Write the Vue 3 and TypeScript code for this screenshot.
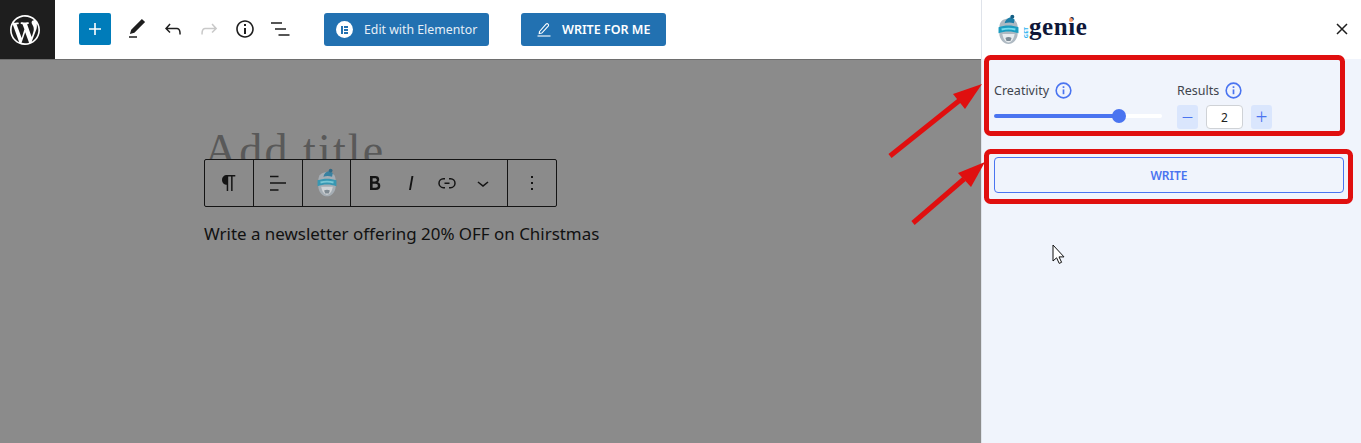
<script setup lang="ts">
const P = {
  plus: 'M18 11.2h-5.2V6h-1.6v5.2H6v1.6h5.2V18h1.6v-5.2H18z',
  pen: 'M20.1 5.1L16.9 2 6.2 12.7l-1.3 4.4 4.5-1.3L20.1 5.1zM4 20.8h8v-1.5H4v1.5z',
  undo: 'M18.3 11.7c-.6-.6-1.4-.9-2.3-.9H6.7l2.9-3.3-1.1-1-4.5 5L8.5 16l1-1-2.7-2.7H16c.5 0 .9.2 1.3.5 1 1 1 3.4 1 4.5v.3h1.5v-.2c0-1.5 0-4.3-1.5-5.7z',
  redo: 'M15.6 6.5l-1.1 1 2.9 3.3H8c-.9 0-1.7.3-2.3.9-1.4 1.5-1.4 4.2-1.4 5.6v.2h1.5v-.3c0-1.1 0-3.5 1-4.5.3-.3.7-.5 1.3-.5h9.2L14.5 15l1.1 1.1 4.6-4.6-4.6-5z',
  info: 'M12 3.2c-4.8 0-8.8 3.9-8.8 8.8 0 4.8 3.9 8.8 8.8 8.8 4.8 0 8.8-3.9 8.8-8.8 0-4.8-4-8.8-8.8-8.8zm0 16c-4 0-7.2-3.3-7.2-7.2C4.8 8 8 4.8 12 4.8s7.2 3.3 7.2 7.2c0 4-3.2 7.2-7.2 7.2zM11 17h2v-6h-2v6zm0-8h2V7h-2v2z',
  list: 'M2 5.2h11v1.6H2zM6 11.2h11v1.6H6zM9.5 17.2h11v1.6H9.5z',
  para: 'M18.3 4H9.9v-.1l-.9.2c-2.3.4-4 2.4-4 4.8s1.7 4.4 4 4.8l.7.1V20h1.5V5.5h2.9V20h1.5V5.5h2.7V4z',
  align: 'M4 19.8h8.5v-1.5H4v1.5zm8.5-15H4v1.5h8.5V4.8zM4 11.2v1.5h16v-1.5H4z',
  bold: 'M14.7 11.3c1-.6 1.5-1.6 1.5-3 0-2.3-1.3-3.4-4-3.4H7v14h5.8c1.4 0 2.5-.3 3.3-1 .8-.7 1.2-1.7 1.2-2.9.1-1.9-.8-3.1-2.6-3.7zm-5.1-4h2.3c.6 0 1.1.1 1.4.4.3.3.5.7.5 1.2s-.2 1-.5 1.2c-.3.3-.8.4-1.4.4H9.6V7.3zm4.6 9c-.4.3-1 .4-1.7.4H9.6v-3.9h2.9c.7 0 1.3.2 1.7.5.4.3.6.8.6 1.5s-.2 1.2-.6 1.5z',
  italic: 'M12.5 5L10 19h1.9l2.5-14z',
  link: 'M10 17.389H8.444A5.194 5.194 0 1 1 8.444 7H10v1.5H8.444a3.694 3.694 0 0 0 0 7.389H10v1.5ZM14 7h1.556a5.194 5.194 0 0 1 0 10.39H14v-1.5h1.556a3.694 3.694 0 0 0 0-7.39H14V7Zm-4.5 6h5v-1.5h-5V13Z',
  chevron: 'M17.5 11.6L12 16l-5.5-4.4.9-1.2L12 14l4.5-3.6 1 1.2z',
  more: 'M13 19h-2v-2h2v2zm0-6h-2v-2h2v2zm0-6h-2V5h2v2z',
}
const wp = 'M20 10c0-5.51-4.49-10-10-10C4.48 0 0 4.49 0 10c0 5.52 4.48 10 10 10 5.51 0 10-4.48 10-10zM7.78 15.37L4.37 6.22c.55-.02 1.17-.08 1.17-.08.5-.06.44-1.13-.06-1.11 0 0-1.45.11-2.37.11-.18 0-.37 0-.58-.01C4.12 2.69 6.87 1.11 10 1.11c2.33 0 4.45.87 6.05 2.34-.68-.11-1.65.39-1.65 1.58 0 .74.45 1.36.9 2.1.35.61.55 1.36.55 2.46 0 1.49-1.4 5-1.4 5l-3.03-8.37c.54-.02.82-.17.82-.17.5-.05.44-1.25-.06-1.22 0 0-1.44.12-2.38.12-.87 0-2.33-.12-2.33-.12-.5-.03-.56 1.2-.06 1.22l.92.08 1.26 3.41zM17.41 10c.24-.64.74-1.87.43-4.25.7 1.29 1.05 2.71 1.05 4.25 0 3.29-1.73 6.24-4.4 7.78.97-2.59 1.94-5.2 2.92-7.78zM6.1 18.09C3.12 16.65 1.11 13.53 1.11 10c0-1.3.23-2.48.72-3.59C3.25 10.3 4.67 14.2 6.1 18.09zm4.03-6.63l2.58 6.98c-.86.29-1.76.45-2.71.45-.79 0-1.57-.11-2.29-.33.81-2.38 1.62-4.74 2.42-7.1z'

const tools = [
  { d: P.pen, color: '#1e1e1e' },
  { d: P.undo, color: '#1e1e1e' },
  { d: P.redo, color: '#c9c9c9' },
  { d: P.info, color: '#1e1e1e' },
  { d: P.list, color: '#1e1e1e' },
]
const formats = [P.bold, P.italic, P.link, P.chevron]
const creativity = 74.5
</script>

<template>
  <div class="page">
    <div class="main">
      <header class="topbar">
        <div class="wp-logo">
          <svg width="30" height="30" viewBox="0 0 20 20"><path :d="wp" fill="#fff" /></svg>
        </div>
        <button class="add"><svg width="24" height="24" viewBox="0 0 24 24"><path :d="P.plus" fill="#fff" /></svg></button>
        <div class="tools">
          <svg v-for="t in tools" :key="t.d" width="24" height="24" viewBox="0 0 24 24"><path :d="t.d" :fill="t.color" /></svg>
        </div>
        <button class="wp-btn elementor">
          <span class="e-badge"><i></i><b></b></span>
          Edit with Elementor
        </button>
        <button class="wp-btn write-me">
          <svg width="16" height="16" viewBox="0 0 16 16" fill="none" stroke="#fff" stroke-width="1.1">
            <path d="M3.5 9.5 10 2.2c.6-.6 1.5-.6 2.1-.1s.6 1.4.1 2L5.8 11l-2.6.6z" />
            <path d="M1.5 14h13" />
          </svg>
          WRITE FOR ME
        </button>
      </header>
      <section class="canvas">
        <div class="block">
          <h1 class="title">Add title</h1>
          <div class="toolbar">
            <div class="seg"><svg width="24" height="24" viewBox="0 0 24 24"><path :d="P.para" /></svg></div>
            <div class="seg"><svg width="24" height="24" viewBox="0 0 24 24"><path :d="P.align" /></svg></div>
            <div class="seg robot-seg"><svg width="22" height="29" viewBox="0 0 30 40"><use href="#robot" /></svg></div>
            <div class="seg formats">
              <svg v-for="d in formats" :key="d" width="24" height="24" viewBox="0 0 24 24"><path :d="d" /></svg>
            </div>
            <div class="seg"><svg width="24" height="24" viewBox="0 0 24 24"><path :d="P.more" /></svg></div>
          </div>
          <p class="text">Write a newsletter offering 20% OFF on Chirstmas</p>
        </div>
      </section>
    </div>

    <aside class="panel">
      <div class="panel-head">
        <div class="brand">
          <svg width="23" height="31" viewBox="0 0 30 40">
            <symbol id="robot" viewBox="0 0 30 40">
              <path d="M3 18C3 9 8 6 15 6s12 3 12 12v7c0 8-6 14-12 14S3 33 3 25z" fill="#aeb9c2" />
              <path d="M7 26c1 6 4 11 8 11s7-5 8-11z" fill="#e8ecef" />
              <path d="M11 31c2-1.500 6-1.500 8 0l-1.500 4h-5z" fill="#7c8a95" />
              <path d="M10 12c1-5 4-7 8-8l5 3-1 5c-4-1.500-8-1.500-12 0z" fill="#1d7ea8" />
              <circle cx="20" cy="3.500" r="2.600" fill="#155f84" />
              <path d="M2 17c8-3 18-3 26 0v8c-8-3-18-3-26 0z" fill="#1b9cc0" />
              <path d="M6 20c6-1.500 12-1.500 18 0" stroke="#74dcee" stroke-width="2.500" fill="none" />
            </symbol>
            <use href="#robot" />
          </svg>
          <span class="get">GET</span>
          <span class="genie">genie<i class="dot"></i></span>
        </div>
        <svg class="close" width="24" height="24" viewBox="0 0 24 24" fill="none" stroke="#1e1e1e" stroke-width="1.5">
          <path d="M7 7l10 10M17 7 7 17" />
        </svg>
      </div>

      <div class="panel-body">
        <div class="settings">
          <div class="field creativity">
            <div class="label">
              Creativity
              <svg class="i" width="17" height="17" viewBox="0 0 16 16" fill="none" stroke="#4a74f0">
                <circle cx="8" cy="8" r="6.900" stroke-width="1.500" />
                <path d="M8 7v4.500" stroke-width="1.600" /><path d="M8 4v1.600" stroke-width="1.600" />
              </svg>
            </div>
            <div class="slider">
              <div class="fill" :style="{ width: creativity + '%' }"><span class="thumb"></span></div>
            </div>
          </div>
          <div class="field">
            <div class="label">
              Results
              <svg class="i" width="17" height="17" viewBox="0 0 16 16" fill="none" stroke="#4a74f0">
                <circle cx="8" cy="8" r="6.900" stroke-width="1.500" />
                <path d="M8 7v4.500" stroke-width="1.600" /><path d="M8 4v1.600" stroke-width="1.600" />
              </svg>
            </div>
            <div class="stepper">
              <button class="step">−</button>
              <div class="count">2</div>
              <button class="step">+</button>
            </div>
          </div>
        </div>
        <button class="write">WRITE</button>
      </div>
    </aside>

    <!-- annotations drawn on top of the screenshot -->
    <svg class="marks" width="1361" height="443" viewBox="0 0 1361 443">
      <rect x="986.5" y="57.5" width="356" height="76" rx="4" fill="none" stroke="#e00f0f" stroke-width="5" />
      <rect x="986.5" y="151.5" width="364" height="50" rx="4" fill="none" stroke="#e00f0f" stroke-width="5" />
      <path d="M890 156 960 100" stroke="#e00f0f" stroke-width="5" />
      <path d="M982 84 953 94 965 109z" fill="#e00f0f" />
      <path d="M913 223 964 179" stroke="#e00f0f" stroke-width="5" />
      <path d="M985 162 958 173 971 187z" fill="#e00f0f" />
      <path d="M1053 245v16l3.600-3.200 2.600 5.600 2.400-1.100-2.600-5.400h5z" fill="#fff" stroke="#111" stroke-width="1" />
    </svg>
  </div>
</template>

<style>
html, body {
  margin: 0;
  overflow: hidden;
}
</style>

<style scoped>
.page {
  position: relative;
  display: flex;
  width: 1361px;
  height: 443px;
  overflow: hidden;
  font-family: "Noto Sans", "Open Sans", sans-serif;
}
button {
  font-family: inherit;
  border: 0;
  padding: 0;
}
.main {
  width: 981px;
  display: flex;
  flex-direction: column;
}
.topbar {
  height: 60px;
  box-sizing: border-box;
  background: #fff;
  border-bottom: 1px solid #6e6e6e;
  display: flex;
  align-items: flex-start;
}
.wp-logo {
  width: 55px;
  height: 59px;
  box-sizing: border-box;
  padding-right: 6px;
  background: #1e1e1e;
  display: flex;
  align-items: center;
  justify-content: center;
  flex: none;
}
.add {
  width: 32px;
  height: 32px;
  margin: 13px 0 0 24px;
  background: #007cba;
  border-radius: 2px;
  display: flex;
  align-items: center;
  justify-content: center;
}
.tools {
  display: flex;
  gap: 12px;
  margin: 17px 0 0 14px;
}
.wp-btn {
  height: 33px;
  margin-top: 13px;
  background: #2271b1;
  color: #fff;
  border-radius: 3px;
  display: flex;
  align-items: center;
  font-size: 12.3px;
}
.elementor {
  width: 165px;
  margin-left: 31px;
  padding-left: 12px;
  gap: 11px;
  color: #e6eff7;
}
.e-badge {
  width: 17px;
  height: 17px;
  border-radius: 50%;
  background: #fff;
  display: flex;
  align-items: center;
  justify-content: center;
  gap: 1px;
}
.e-badge i {
  width: 2px;
  height: 8px;
  background: #2271b1;
}
.e-badge b {
  width: 4px;
  height: 8px;
  background: repeating-linear-gradient(#2271b1 0 2px, #fff 2px 3px);
}
.write-me {
  width: 145px;
  margin-left: 32px;
  padding-left: 15px;
  gap: 10px;
  font-weight: 600;
  font-size: 12.5px;
}
.canvas {
  flex: 1;
  background: #8b8b8b;
}
.block {
  position: relative;
  margin-left: 204px;
  padding-top: 65px;
}
.title {
  margin: 0;
  font: 300 46px/52px "Liberation Serif", serif;
  color: #595959;
  letter-spacing: 2.100px;
}
.toolbar {
  position: absolute;
  top: 99px;
  left: 0;
  height: 48px;
  box-sizing: border-box;
  display: flex;
  background: #8b8b8b;
  border: 1px solid #141414;
  border-radius: 2px;
}
.seg {
  width: 48px;
  display: flex;
  align-items: center;
  justify-content: center;
  border-right: 1px solid #141414;
  box-sizing: content-box;
}
.seg:last-child {
  border-right: 0;
}
.seg svg {
  fill: #141414;
}
.robot-seg {
  width: 47px;
}
.robot-seg svg {
  opacity: 0.75;
  margin-top: -1px;
}
.formats {
  width: 156px;
  gap: 12px;
}
.text {
  margin: 0;
  padding-top: 45px;
  font-size: 16.93px;
  line-height: 24px;
  color: #111;
}
.panel {
  width: 380px;
  display: flex;
  flex-direction: column;
  background: #f0f4fc;
  border-left: 1px solid #dfe3ea;
  box-sizing: border-box;
}
.panel-head {
  height: 59px;
  flex: none;
  background: #fff;
  display: flex;
  align-items: center;
  justify-content: space-between;
  padding: 0 7px 0 15px;
  box-sizing: border-box;
}
.brand {
  position: relative;
  display: flex;
  align-items: center;
}
.get {
  font-size: 6px;
  line-height: 7px;
  font-weight: 700;
  color: #2fb4ef;
  writing-mode: vertical-rl;
  transform: rotate(180deg);
  margin: 6px 0 0 3px;
}
.genie {
  position: relative;
  font: 700 25px/24px "Liberation Serif", serif;
  color: #0f1738;
  margin: -6px 0 0 -1px;
  letter-spacing: 0.6px;
}
.dot {
  position: absolute;
  left: 40px;
  top: 3px;
  width: 4px;
  height: 4px;
  border-radius: 50%;
  background: #f79a6b;
}
.close {
  margin-top: -2px;
}
.panel-body {
  padding: 0 16px 0 12px;
}
.settings {
  display: flex;
  gap: 15px;
  padding-top: 21px;
}
.creativity {
  width: 168px;
}
.label {
  height: 20px;
  display: flex;
  align-items: center;
  gap: 6px;
  font-size: 12.5px;
  color: #3f444d;
}
.i {
  flex: none;
}
.slider {
  margin-top: 14px;
  height: 4px;
  border-radius: 2px;
  background: #fff;
}
.fill {
  position: relative;
  height: 100%;
  background: #4a74f0;
  border-radius: 2px;
}
.thumb {
  position: absolute;
  right: -7px;
  top: -5px;
  width: 14px;
  height: 14px;
  border-radius: 50%;
  background: #4a74f0;
}
.stepper {
  margin-top: 5px;
  display: flex;
  gap: 8px;
}
.step {
  width: 21px;
  height: 24px;
  background: #dae6fd;
  color: #4a74f0;
  border-radius: 3px;
  font-size: 21px;
  line-height: 22px;
  font-weight: 300;
}
.count {
  width: 37px;
  height: 24px;
  box-sizing: border-box;
  background: #fff;
  border: 1px solid #cfd2d6;
  border-radius: 4px;
  font-size: 12px;
  line-height: 24px;
  text-align: center;
  color: #222;
}
.write {
  display: block;
  width: 350px;
  height: 36px;
  margin-top: 28px;
  box-sizing: border-box;
  background: transparent;
  border: 1px solid #4a74f0;
  border-radius: 4px;
  color: #4a74f0;
  font-size: 12px;
  font-weight: 600;
}
.marks {
  position: absolute;
  left: 0;
  top: 0;
  pointer-events: none;
}
</style>
